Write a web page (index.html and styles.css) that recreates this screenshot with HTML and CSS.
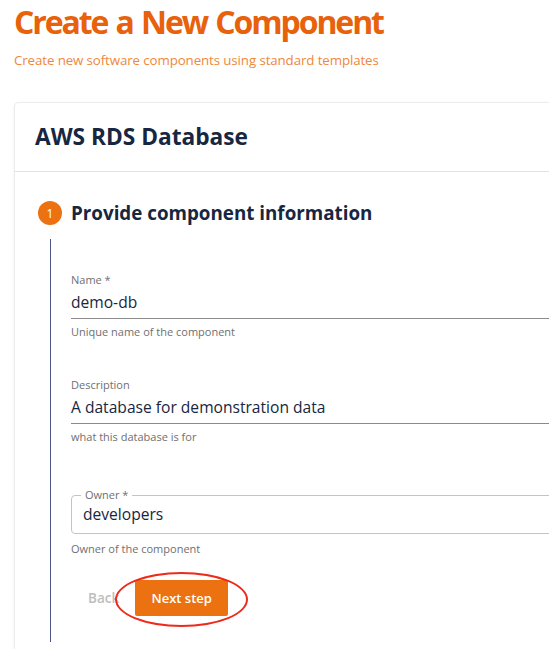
FILE: index.html
```html
<!DOCTYPE html>
<html lang="en">
<head>
<meta charset="utf-8">
<link rel="stylesheet" href="styles.css">
</head>
<body>
<header class="page-head">
  <h1 class="page-title">Create a New Component</h1>
  <p class="page-sub">Create new software components using standard templates</p>
</header>
<section class="card">
  <div class="card-head">
    <h2 class="card-title">AWS RDS Database</h2>
  </div>
  <div class="card-body">
    <div class="step-head">
      <span class="step-num">1</span>
      <h3 class="step-title">Provide component information</h3>
    </div>
    <div class="step-content">
      <div class="field">
        <label class="field-label">Name *</label>
        <div class="field-input">demo-db</div>
        <div class="field-help">Unique name of the component</div>
      </div>
      <div class="field field-desc">
        <label class="field-label">Description</label>
        <div class="field-input">A database for demonstration data</div>
        <div class="field-help">what this database is for</div>
      </div>
      <div class="field field-owner">
        <div class="outlined">
          <span class="outlined-label">Owner *</span>
          <div class="outlined-value">developers</div>
        </div>
        <div class="field-help">Owner of the component</div>
      </div>
      <div class="actions">
        <span class="btn-back">Back</span>
        <span class="btn-next">Next step<span class="circle-mark"></span></span>
      </div>
    </div>
  </div>
</section>
</body>
</html>
```
FILE: styles.css
```css
html, body {
  margin: 0;
  padding: 0;
  overflow: hidden;
  background: #fff;
}
body {
  font-family: "Open Sans", "Noto Sans", sans-serif;
  width: 549px;
  height: 649px;
  padding-left: 14px;
  box-sizing: border-box;
}
.page-title {
  margin: 0;
  font-size: 32px;
  line-height: 44px;
  font-weight: 700;
  color: #e8610b;
  letter-spacing: -2.1px;
  word-spacing: 2px;
  white-space: nowrap;
}
.page-sub {
  margin: 7px 0 0 0;
  font-size: 13.3px;
  line-height: 18px;
  color: #f0873d;
  letter-spacing: -0.1px;
  white-space: nowrap;
}
.card {
  margin-top: 33px;
  width: 640px;
  border: 1px solid #ececec;
  border-radius: 4px;
  box-shadow: 0 1px 3px rgba(0,0,0,0.06);
  height: 560px;
}
.card-head {
  height: 68px;
  border-bottom: 1px solid #e3e3e3;
  padding-left: 20px;
  display: flex;
  align-items: center;
}
.card-title {
  margin: 0;
  font-size: 22.7px;
  font-weight: 700;
  color: #172641;
  line-height: 30px;
}
.card-body {
  padding: 28px 0 0 23px;
}
.step-head {
  display: flex;
  align-items: center;
  gap: 9px;
}
.step-num {
  width: 24px;
  height: 24px;
  border-radius: 50%;
  background: #ec7211;
  color: #fff;
  font-size: 12px;
  display: flex;
  align-items: center;
  justify-content: center;
}
.step-title {
  margin: 0;
  font-size: 18.8px;
  line-height: 26px;
  font-weight: 700;
  color: #172641;
}
.step-content {
  margin: 13px 0 0 12px;
  border-left: 1px solid #4a5788;
  padding-left: 20px;
  padding-top: 34px;
  height: 369px;
}
.field-label {
  display: block;
  font-size: 11px;
  line-height: 14px;
  color: #6f6f6f;
}
.field-input {
  font-size: 15.6px;
  line-height: 22px;
  color: #172641;
  padding: 4px 0 5px;
  border-bottom: 1px solid #8a8a8a;
}
.field-help {
  font-size: 11px;
  line-height: 14px;
  color: #6f6f6f;
  margin-top: 6px;
}
.field-desc {
  margin-top: 39px;
}
.field-owner {
  margin-top: 51px;
}
.outlined {
  position: relative;
  border: 1px solid #c4c4c4;
  border-radius: 4px;
  height: 39px;
  box-sizing: border-box;
  padding: 8px 0 0 11px;
}
.outlined-label {
  position: absolute;
  top: -8px;
  left: 9px;
  padding: 0 4px;
  background: #fff;
  font-size: 11px;
  line-height: 14px;
  color: #6f6f6f;
}
.outlined-value {
  font-size: 15.6px;
  line-height: 22px;
  color: #172641;
  margin-top: -1px;
}
.field-owner .field-help {
  margin-top: 8px;
}
.actions {
  display: flex;
  align-items: center;
  margin-top: 24px;
  gap: 16px;
}
.btn-back {
  font-size: 13.5px;
  color: #bdbdbd;
  padding-left: 17px;
  font-weight: 600;
}
.btn-next {
  position: relative;
  background: #ec7211;
  color: #fff;
  font-size: 13px;
  font-weight: 600;
  width: 93px;
  height: 36px;
  display: flex;
  align-items: center;
  justify-content: center;
  border-radius: 2px;
}
.circle-mark {
  position: absolute;
  left: -20px;
  top: -8px;
  width: 133px;
  height: 55px;
  border: 2px solid #ee2a1b;
  border-radius: 50%;
  box-sizing: border-box;
}
```
